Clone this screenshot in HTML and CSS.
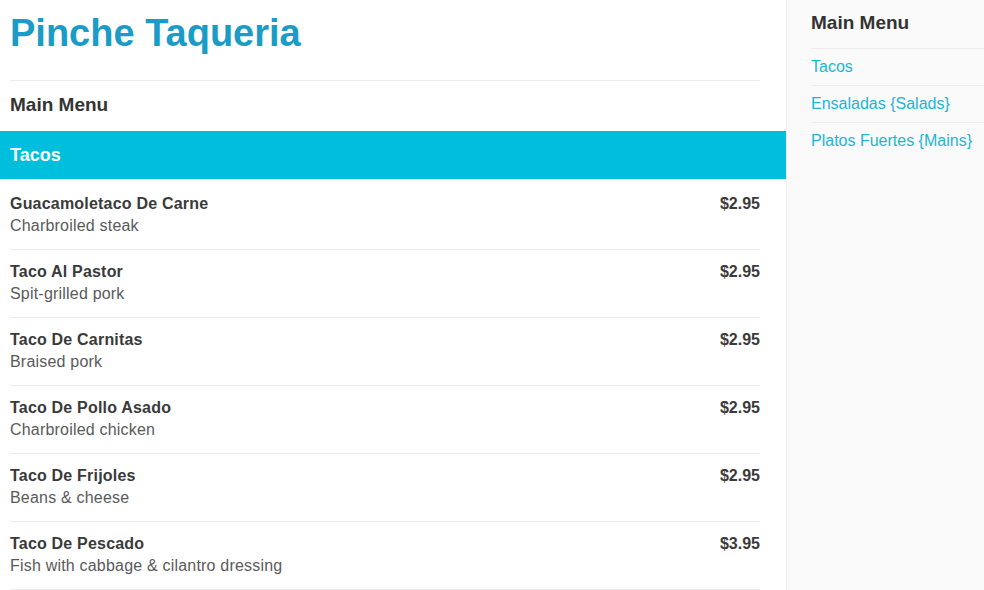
FILE: index.html
```html
<!DOCTYPE html>
<html>
<head>
<meta charset="utf-8">
<title>Pinche Taqueria</title>
<link rel="stylesheet" href="styles.css">
</head>
<body>
<div class="page">
  <main class="main">
    <header class="header">
      <h1 class="site-title">Pinche Taqueria</h1>
    </header>
    <h2 class="menu-title">Main Menu</h2>
    <h3 class="section-bar">Tacos</h3>
    <ul class="items">
      <li class="item">
        <div class="item-text"><div class="item-name">Guacamoletaco De Carne</div><div class="item-desc">Charbroiled steak</div></div>
        <div class="item-price">$2.95</div>
      </li>
      <li class="item">
        <div class="item-text"><div class="item-name">Taco Al Pastor</div><div class="item-desc">Spit-grilled pork</div></div>
        <div class="item-price">$2.95</div>
      </li>
      <li class="item">
        <div class="item-text"><div class="item-name">Taco De Carnitas</div><div class="item-desc">Braised pork</div></div>
        <div class="item-price">$2.95</div>
      </li>
      <li class="item">
        <div class="item-text"><div class="item-name">Taco De Pollo Asado</div><div class="item-desc">Charbroiled chicken</div></div>
        <div class="item-price">$2.95</div>
      </li>
      <li class="item">
        <div class="item-text"><div class="item-name">Taco De Frijoles</div><div class="item-desc">Beans &amp; cheese</div></div>
        <div class="item-price">$2.95</div>
      </li>
      <li class="item">
        <div class="item-text"><div class="item-name">Taco De Pescado</div><div class="item-desc">Fish with cabbage &amp; cilantro dressing</div></div>
        <div class="item-price">$3.95</div>
      </li>
    </ul>
  </main>
  <aside class="sidebar">
    <h2 class="side-title">Main Menu</h2>
    <ul class="side-links">
      <li class="side-link"><a href="#">Tacos</a></li>
      <li class="side-link"><a href="#">Ensaladas {Salads}</a></li>
      <li class="side-link"><a href="#">Platos Fuertes {Mains}</a></li>
    </ul>
  </aside>
</div>
</body>
</html>
```

FILE: styles.css
```css
html, body {
  margin: 0;
  padding: 0;
  background: #ffffff;
  font-family: "Liberation Sans", Arial, sans-serif;
  color: #333333;
}

.page {
  display: flex;
  min-height: 100vh;
}

.main {
  flex: 0 0 786px;
  width: 786px;
}

.header {
  margin: 0 26px 0 10px;
  padding: 11px 0 25px;
  border-bottom: 1px solid #ececec;
}

.site-title {
  margin: 0;
  font-size: 38px;
  line-height: 44px;
  font-weight: bold;
  color: #1a9cc6;
}

.menu-title {
  margin: 12px 26px 14px 10px;
  font-size: 19px;
  line-height: 24px;
  font-weight: bold;
  color: #333333;
}

.section-bar {
  margin: 0;
  height: 48px;
  padding: 0 10px;
  display: flex;
  align-items: center;
  background: #00bfdc;
  color: #ffffff;
  font-size: 18px;
  font-weight: bold;
}

.items {
  list-style: none;
  margin: 3px 26px 0 10px;
  padding: 0;
}

.item {
  display: flex;
  justify-content: space-between;
  align-items: flex-start;
  padding: 11px 0 12px;
  border-bottom: 1px solid #ececec;
  font-size: 16px;
  line-height: 22px;
  letter-spacing: 0.2px;
}

.item-name {
  font-weight: bold;
  color: #3a3a3a;
}

.item-desc {
  color: #5a5a5a;
}

.item-price {
  font-weight: bold;
  color: #3a3a3a;
  letter-spacing: 0;
}

.sidebar {
  flex: 1;
  background: #fafafa;
  border-left: 1px solid #efefef;
  padding: 11px 0 0 24px;
}

.side-title {
  margin: 0;
  padding-bottom: 13px;
  font-size: 19px;
  line-height: 24px;
  font-weight: bold;
  color: #333333;
  border-bottom: 1px solid #ececec;
}

.side-links {
  list-style: none;
  margin: 0;
  padding: 0;
}

.side-link {
  padding: 8px 0;
  font-size: 16px;
  line-height: 20px;
  border-bottom: 1px solid #ececec;
}

.side-link:last-child {
  border-bottom: none;
}

.side-link a {
  color: #1db4d6;
  text-decoration: none;
}
```
